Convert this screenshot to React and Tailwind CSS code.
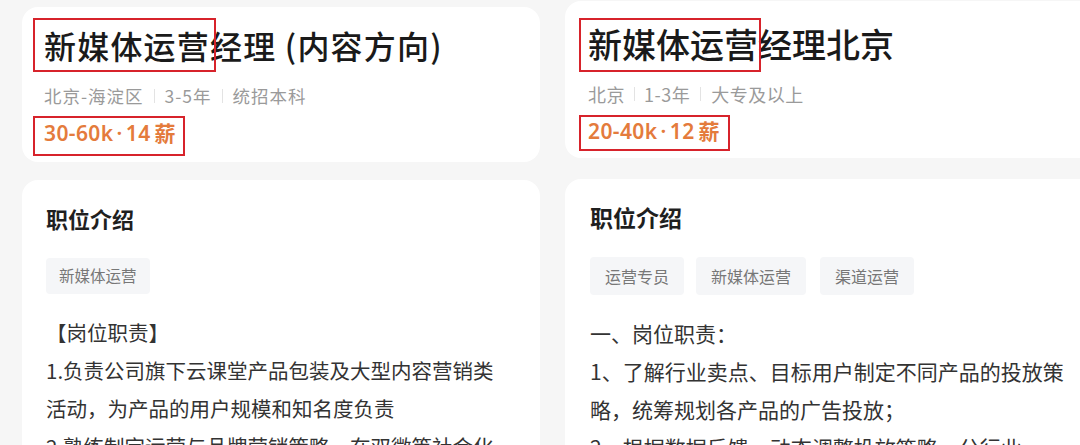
const FONT = { fontFamily: '"Noto Sans CJK SC", "Noto Sans", sans-serif' };
const NUM = { fontFamily: '"Noto Sans", "Noto Sans CJK SC", sans-serif' };

function Marked({ children, box }) {
  return (
    <span className="relative inline-block">
      {children}
      <span className={`absolute border-2 border-[#d7232b] pointer-events-none ${box}`} />
    </span>
  );
}

function Sep({ cls = "mx-[10px]" }) {
  return <span className={`inline-block h-[14px] w-px bg-[#e3e3e3] ${cls}`} />;
}

function Tag({ children, cls }) {
  return (
    <span className={`inline-flex items-center rounded-[4px] bg-[#f5f6f8] text-[#777] ${cls}`}>
      {children}
    </span>
  );
}

function Salary({ range, months }) {
  return (
    <span className="tracking-[0.4px]">
      {range}
      <span className="mx-[3px]">·</span>
      {months}
      <span className="ml-[4px]">薪</span>
    </span>
  );
}

export default function App() {
  return (
    <div
      className="w-[1080px] h-[445px] overflow-hidden bg-[#f6f6f6] flex"
      style={FONT}
    >
      {/* left screenshot */}
      <div className="w-[540px] shrink-0 pl-[22px] flex flex-col">
        <div className="shrink-0 mt-[7px] h-[155px] rounded-[16px] bg-white pl-[22px] pt-[18px]">
          <div className="h-[40px] leading-[40px] text-[32px] font-medium text-[#1a1a1a] whitespace-nowrap tracking-[1.2px]">
            <Marked box="-left-[11px] -right-[6px] -top-[7px] -bottom-[7px]">新媒体运营</Marked>
            经理 (内容方向)
          </div>
          <div className="mt-[19px] h-[24px] flex items-center text-[17.5px] tracking-[1px] text-[#9a9a9a]">
            <span>北京-海淀区</span>
            <Sep />
            <span>3-5年</span>
            <Sep />
            <span>统招本科</span>
          </div>
          <div
            className="mt-[11px] h-[28px] leading-[28px] text-[21px] font-semibold text-[#e47b3c]"
            style={NUM}
          >
            <Marked box="-left-[11px] -right-[9px] -top-[3px] -bottom-[9px]">
              <Salary range="30-60k" months="14" />
            </Marked>
          </div>
        </div>

        <div className="shrink-0 mt-[18px] h-[300px] rounded-t-[16px] bg-white pl-[24px] pt-[23px]">
          <div className="h-[30px] leading-[30px] text-[22px] font-bold text-[#1f1f1f]">职位介绍</div>
          <div className="mt-[25px] flex">
            <Tag cls="h-[36px] px-[13px] text-[15.5px]">新媒体运营</Tag>
          </div>
          <div className="mt-[19px] text-[20.5px] leading-[38px] text-[#333] whitespace-nowrap">
            <div>【岗位职责】</div>
            <div>1.负责公司旗下云课堂产品包装及大型内容营销类</div>
            <div>活动，为产品的用户规模和知名度负责</div>
            <div>2.熟练制定运营与品牌营销策略，在双微等社会化</div>
          </div>
        </div>
      </div>

      {/* right screenshot */}
      <div className="w-[540px] shrink-0 pl-[25px] flex flex-col">
        <div className="shrink-0 mt-[1px] h-[157px] w-[540px] rounded-[16px] bg-white pl-[23px] pt-[22px]">
          <div className="h-[42px] leading-[42px] text-[34px] font-medium text-[#1a1a1a] whitespace-nowrap">
            <Marked box="-left-[9px] -right-[3px] -top-[5px] -bottom-[7px]">新媒体运营</Marked>
            经理北京
          </div>
          <div className="mt-[17px] h-[24px] flex items-center text-[18px] tracking-[0.5px] text-[#9a9a9a]">
            <span>北京</span>
            <Sep cls="mx-[9px]" />
            <span>1-3年</span>
            <Sep cls="mx-[10px]" />
            <span>大专及以上</span>
          </div>
          <div
            className="mt-[11px] h-[28px] leading-[28px] text-[21px] font-semibold text-[#e47b3c]"
            style={NUM}
          >
            <Marked box="-left-[9px] -right-[10px] -top-[2px] -bottom-[6px]">
              <Salary range="20-40k" months="12" />
            </Marked>
          </div>
        </div>

        <div className="shrink-0 mt-[21px] h-[300px] w-[540px] rounded-t-[16px] bg-white pl-[25px] pt-[22px]">
          <div className="h-[32px] leading-[32px] text-[23px] font-bold text-[#1f1f1f]">职位介绍</div>
          <div className="mt-[24px] flex">
            <Tag cls="h-[38px] px-[15px] text-[16px]">运营专员</Tag>
            <Tag cls="ml-[12px] h-[38px] px-[15px] text-[16px]">新媒体运营</Tag>
            <Tag cls="ml-[14px] h-[38px] px-[15px] text-[16px]">渠道运营</Tag>
          </div>
          <div className="mt-[19px] text-[21px] leading-[38px] text-[#333] whitespace-nowrap">
            <div>一、岗位职责：</div>
            <div>1、了解行业卖点、目标用户制定不同产品的投放策</div>
            <div>略，统筹规划各产品的广告投放；</div>
            <div>2、根据数据反馈，动态调整投放策略，分行业</div>
          </div>
        </div>
      </div>
    </div>
  );
}
